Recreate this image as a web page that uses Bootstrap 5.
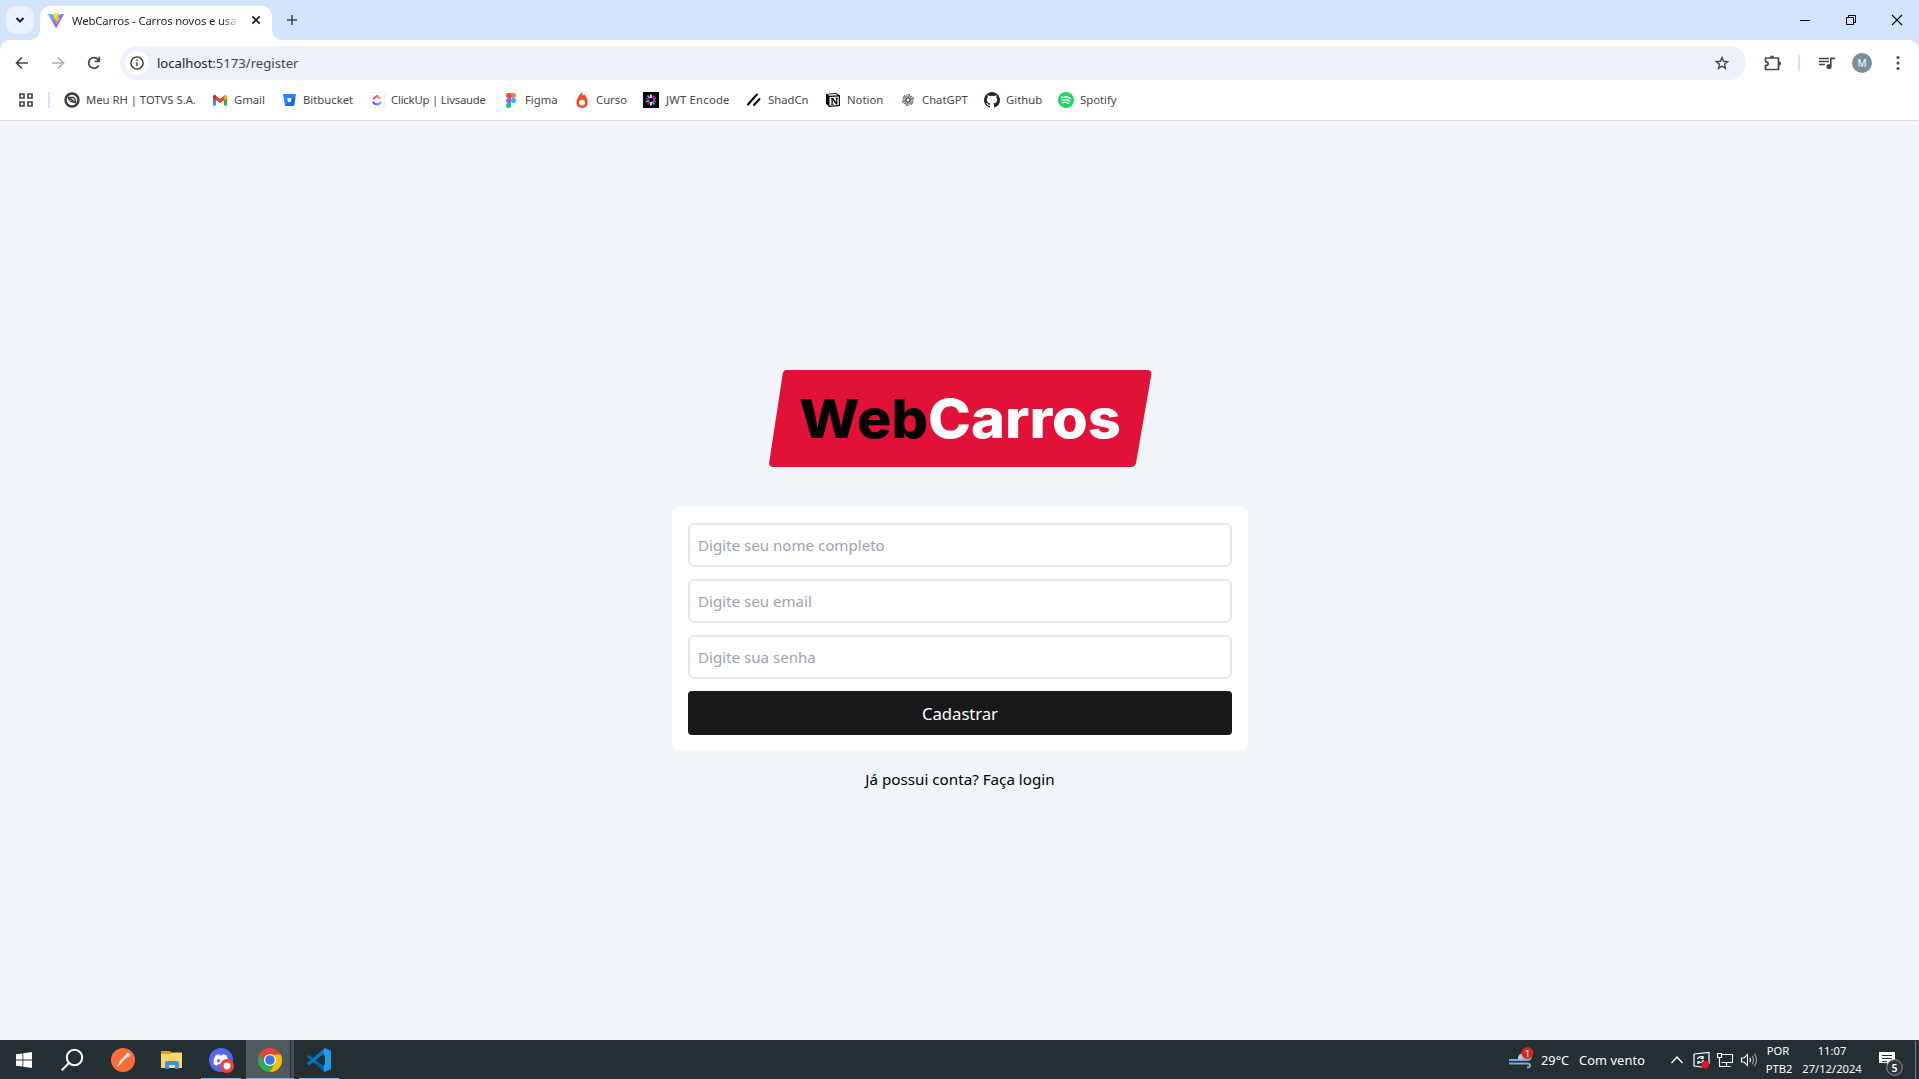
<!DOCTYPE html>
<html lang="pt-BR">
<head>
<meta charset="utf-8">
<meta name="viewport" content="width=device-width, initial-scale=1">
<title>WebCarros - Carros novos e usados</title>
<link href="https://cdn.jsdelivr.net/npm/bootstrap@5.3.0/dist/css/bootstrap.min.css" rel="stylesheet">
<style>
body{font-family:"Noto Sans","Open Sans",sans-serif;background:#f1f5f9;height:100vh;overflow:hidden;color:#1f1f1f}
svg{display:block;flex:none;overflow:visible}
.tabstrip{height:40px;background:#d3e3fd;padding-left:6px}
.tab-search{width:28px;height:28px;border-radius:10px;background:#ebf2fe;margin-top:6px}
.browser-tab{width:232px;height:34px;margin:6px 0 0 6px;background:#fff;border-radius:10px 10px 0 0;padding:0 10px 6px 8px;position:relative}
.browser-tab::before,.browser-tab::after{content:"";position:absolute;bottom:0;width:10px;height:10px}
.browser-tab::before{left:-10px;background:radial-gradient(circle at 0 0,transparent 9.5px,#fff 10px)}
.browser-tab::after{right:-10px;background:radial-gradient(circle at 100% 0,transparent 9.5px,#fff 10px)}
.tab-title{width:168px;font-size:11.3px;letter-spacing:-.13px;margin-left:8px;line-height:18px;padding-top:1px;-webkit-mask-image:linear-gradient(90deg,#000 150px,transparent 168px);mask-image:linear-gradient(90deg,#000 150px,transparent 168px)}
.win-controls{width:137px;height:40px}
.win-controls>span{width:46px;flex:none}
.toolbar-wrap{background:#d3e3fd;height:41px}
.toolbar{background:#fff;border-radius:10px 10px 0 0;height:41px;padding:6px 13px 1px 13px}
.omnibox{height:34px;width:1626px;border-radius:17px;background:#ecf1fa;padding-left:5px;padding-right:17px}
.site-info{width:24px;height:24px;background:#fff}
.address{font-size:13.2px;margin-left:8px;letter-spacing:-.04px;line-height:20px}
.address i{font-style:normal;color:#474747}
.bookmarks{height:40px;background:#fff;border-bottom:1px solid #dcdcdc;padding:0 0 1px 18px}
.bm{gap:6px;font-size:11.3px;color:#474747;line-height:16px}
.divider{width:2px;height:16px;background:#d3e3fd}
.page{height:919px;padding-top:249px}
.brand-logo{margin-bottom:40px}
.signup{width:576px;background:#fff;border-radius:8px;gap:12px;margin-left:1px}
.signup .form-control{height:44px;border:2px solid #e5e7eb;border-radius:6px;padding:0 8px;font-size:15.1px;letter-spacing:0}
.signup .form-control::placeholder{color:#9ca3af}
.signup .btn{height:44px;background:#18181b;border:0;border-radius:4px;font-size:16.8px;padding:2px 0 0;letter-spacing:-.1px}
.login-link{color:#000;font-size:15.2px;margin:16px 0 0 1px;line-height:24px}
.taskbar{height:39px;background:#242f34;color:#fff;font-size:12.8px}
.task{width:48px;height:39px;padding-top:1px}
.task.open{box-shadow:inset 0 -1px #76b9ed}
.tray{font-size:11.2px;line-height:18px;text-align:center}
</style>
</head>
<body class="d-flex flex-column">
<header>
  <div class="tabstrip d-flex">
    <div class="tab-search d-flex align-items-center justify-content-center"><svg width="10" height="8" fill="none" stroke="#1f1f1f" stroke-width="2"><path d="M1.5 2 5 5.5 8.500 2"/></svg></div>
    <div class="browser-tab d-flex align-items-center">
      <svg width="16" height="16" viewBox="0 0 32 32"><defs><linearGradient id="va" x2=".7" y2="1"><stop stop-color="#41d1ff"/><stop offset="1" stop-color="#bd34fe"/></linearGradient><linearGradient id="vb" x2="0" y2="1"><stop stop-color="#ffea83"/><stop offset=".2" stop-color="#ffdd35"/><stop offset="1" stop-color="#ffa800"/></linearGradient></defs><path fill="url(#va)" d="M31.800 5 17 31.200q-.8 1.100-1.700 0L.2 5q-.6-1.500 1-1.600l14.800 2.700 14.600-2.700q1.700.1 1.200 1.600"/><path fill="url(#vb)" d="M22.800.5 12 2.600l-.8 11.500 4-.7-1 5.500 3-.8-1.600 7.800 8-14.500-4.500.8z"/></svg>
      <span class="tab-title text-nowrap overflow-hidden">WebCarros - Carros novos e usa</span>
      <svg class="ms-auto" width="12" height="12" stroke="#1f1f1f" stroke-width="1.700"><path d="m2.300 2.300 7.400 7.400M9.700 2.300 2.300 9.700"/></svg>
    </div>
    <svg style="margin:14px 0 0 14px" width="12" height="12" stroke="#474747" stroke-width="1.600"><path d="M6 1v10M1 6h10"/></svg>
    <div class="win-controls d-flex ms-auto">
      <span class="d-flex align-items-center justify-content-center"><svg width="10" height="10" fill="none" stroke="#000"><path d="M0 5.500h10"/></svg></span>
      <span class="d-flex align-items-center justify-content-center"><svg width="10" height="10" fill="none" stroke="#000"><path d="M.5 2.500h7v7h-7zM2.500 2.500v-2h7v7h-2"/></svg></span>
      <span class="d-flex align-items-center justify-content-center"><svg width="10" height="10" fill="none" stroke="#000" stroke-width="1.100"><path d="m0 0 10 10M10 0 0 10"/></svg></span>
    </div>
  </div>
  <div class="toolbar-wrap">
    <div class="toolbar d-flex align-items-center">
      <svg width="18" height="18" fill="none" stroke="#474747" stroke-width="1.700"><path d="M15 9H4M9 3.500 3.500 9 9 14.500"/></svg>
      <svg style="margin-left:18px" width="18" height="18" fill="none" stroke="#b0b0b0" stroke-width="1.700"><path d="M3 9h11M9 3.500 14.500 9 9 14.500"/></svg>
      <svg style="margin-left:18px" width="18" height="18" fill="none" stroke="#474747" stroke-width="1.700"><path d="M13.700 11.300A5.300 5.300 0 1 1 13 5.500l1.200 1.300M14.300 2.800v4.500H9.700"/></svg>
      <div class="omnibox d-flex align-items-center" style="margin-left:17px">
        <span class="site-info rounded-circle d-flex align-items-center justify-content-center"><svg width="14" height="14" fill="none" stroke="#333" stroke-width="1.400"><circle cx="7" cy="7" r="6.100"/><path d="M7 6.200v4M7 3.500V5"/></svg></span>
        <span class="address">localhost<i>:5173/register</i></span>
        <svg class="ms-auto" width="14" height="14" viewBox="0 0 14 14" fill="none" stroke="#474747" stroke-width="1.400"><path d="m7 1.500 1.600 3.800 4.100.3-3.100 2.700.9 4.100L7 10.200l-3.500 2.200.9-4.100-3.100-2.700 4.100-.3z"/></svg>
      </div>
      <svg style="margin-left:18px" width="18" height="18" fill="none" stroke="#474747" stroke-width="1.700"><path d="M1.500 4h13v11.500h-13v-3.800q2.600-.2 2.600-2T1.500 7.800z" stroke-linejoin="round"/><path fill="#474747" stroke="none" d="M6 3.500a2.100 2.100 0 0 1 4.200 0zM15 7.500a2.100 2.100 0 0 1 0 4.200z"/></svg>
      <span class="divider" style="margin-left:16px"></span>
      <svg style="margin-left:19px" width="16" height="14" fill="none" stroke="#474747" stroke-width="1.700"><path d="M0 2.500h10M0 5.500h10M0 8.500h6M11.800 10V2.400H16"/><circle cx="10" cy="10.500" r="2.600" fill="#474747" stroke="none"/></svg>
      <span class="rounded-circle text-white d-flex align-items-center justify-content-center" style="margin-left:17px;width:20px;height:20px;background:#78909c;font-size:10px">M</span>
      <svg style="margin-left:24px" width="4" height="16" fill="#474747"><circle cx="2" cy="2.500" r="1.500"/><circle cx="2" cy="8" r="1.500"/><circle cx="2" cy="13.500" r="1.500"/></svg>
    </div>
  </div>
  <nav class="bookmarks d-flex align-items-center text-nowrap">
    <svg width="16" height="16" fill="none" stroke="#474747" stroke-width="1.700"><path d="M2 2h4v4H2zM10 2h4v4h-4zM2 10h4v4H2zM10 10h4v4h-4z"/></svg>
    <span class="divider" style="margin:0 14px"></span>
    <a class="bm d-flex align-items-center text-decoration-none" style="width:148px"><svg width="16" height="16" fill="none" stroke="#3d3a36"><circle cx="8" cy="8" r="6.500" stroke-width="2.400"/><path stroke-width="1.300" d="M4.500 5.500h4.700l2.300 2.200v3L6.800 9.500 4.500 7z"/><path stroke-width="1.500" d="m4 5 8 6"/></svg><span style="letter-spacing:-.02px">Meu RH | TOTVS S.A.</span></a>
    <a class="bm d-flex align-items-center text-decoration-none" style="width:69px"><svg width="16" height="16"><path fill="#4285f4" d="M1 4v9.500h3V6z"/><path fill="#34a853" d="M12 6v7.500h3V4z"/><path fill="#ea4335" d="m3 3 5 4 5-4v4.500L8 11 3 7.500z"/><path fill="#c5221f" d="M1 4.500Q1.200 2 3.500 3L4 8 1 6z"/><path fill="#fbbc04" d="M15 4.500Q14.800 2 12.500 3L12 8l3-2z"/></svg>Gmail</a>
    <a class="bm d-flex align-items-center text-decoration-none" style="width:88px"><svg width="16" height="16"><path fill="#2684ff" fill-rule="evenodd" d="M2 2h13l-2 12H4zm4.300 4 .7 4.300h3L10.700 6z"/><path fill="#0c5bd8" d="M14.400 6h-3.700L10 10.300H7L4.200 14H13z" opacity=".65"/></svg>Bitbucket</a>
    <a class="bm d-flex align-items-center text-decoration-none" style="width:134px"><svg width="16" height="16" fill="none" stroke-width="2.100"><defs><linearGradient id="ca"><stop stop-color="#ff02f0"/><stop offset="1" stop-color="#ffc800"/></linearGradient><linearGradient id="cb"><stop stop-color="#8930fd"/><stop offset="1" stop-color="#49ccf9"/></linearGradient></defs><rect x=".5" y=".5" width="15" height="15" rx="1" stroke="#f0f0f0" stroke-width="1"/><path stroke="url(#ca)" d="M4.300 7 8 3.800 11.700 7"/><path stroke="url(#cb)" d="M3.800 10Q8 14.800 12.200 10"/></svg><span style="letter-spacing:-.2px">ClickUp | Livsaude</span></a>
    <a class="bm d-flex align-items-center text-decoration-none" style="width:71px"><svg width="16" height="16"><path fill="#f24e1e" d="M8 1H5.500a2.400 2.400 0 0 0 0 5H8z"/><path fill="#ff7262" d="M8 1h2.500a2.400 2.400 0 0 1 0 5H8z"/><path fill="#a259ff" d="M8 6H5.500a2.400 2.400 0 0 0 0 5H8z"/><circle cx="10.500" cy="8.500" r="2.500" fill="#1abcfe"/><path fill="#0acf83" d="M8 11H5.500A2.500 2.500 0 1 0 8 13.500z"/></svg>Figma</a>
    <a class="bm d-flex align-items-center text-decoration-none" style="width:69px"><svg width="16" height="16"><path fill="#f04e23" fill-rule="evenodd" d="M7.500 0 9 3.500l1.500-1Q14 7 13.700 10.500A5.500 5.500 0 0 1 8 16q-5.300-.4-5.600-5.600C2.400 7 5 4 7.500 0M8 7.800a3 3 0 1 0 .1 0"/></svg>Curso</a>
    <a class="bm d-flex align-items-center text-decoration-none" style="width:103px"><svg width="16" height="16" stroke-width="1.700"><path fill="#000" d="M0 0h16v16H0z"/><path stroke="#fff" d="M8 2.500V6M8 10v3.500"/><path stroke="#fb015b" d="M9.200 6.300 11.500 3.500M6.800 9.700 4.500 12.500M2.800 6.300 6 7.300"/><path stroke="#00f2e6" d="M6.800 6.300 4.500 3.500M9.200 9.700l2.300 2.800M2.800 9.700 6 8.700"/><path stroke="#d63aff" d="m10 7.300 3.200-1M10 8.700l3.200 1"/></svg><span style="letter-spacing:.2px;margin-left:1px">JWT Encode</span></a>
    <a class="bm d-flex align-items-center text-decoration-none" style="width:79px"><svg width="16" height="16" stroke="#000" stroke-width="2" stroke-linecap="round"><path d="M2 12.500 9 4.500M8 13 13.500 7M9 4.500 11 2.500"/></svg>ShadCn</a>
    <a class="bm d-flex align-items-center text-decoration-none" style="width:75px"><svg width="16" height="16"><path d="M1 2l10-1 4 2.500V14l-11 1L1 11.500z"/><path fill="#fff" d="m2.500 2.500 8.200-.6 2.300 1.300-8.500.5zM4.500 5l9.300-.5V13l-9.300.7z"/><path d="M6 6h2.300l2.900 4.400V6.800l-.7-.2v-.8H13v.7l-.6.3v5.600H11L7.700 8v3.800l.9.200v.7H6V12l.5-.2V6.900L6 6.700z"/></svg>Notion</a>
    <a class="bm d-flex align-items-center text-decoration-none" style="width:84px"><svg width="16" height="16" fill="none" stroke="#4a4a4a" stroke-width=".95" viewBox="-9.500 -9.500 19 19"><g id="petal"><path d="M-2.300-3.500V1.300L0 2.600M-2.300-3.500A3 3 0 0 1 2.700-5.800L-1.100-3.600"/></g><use href="#petal" transform="rotate(60)"/><use href="#petal" transform="rotate(120)"/><use href="#petal" transform="rotate(180)"/><use href="#petal" transform="rotate(240)"/><use href="#petal" transform="rotate(300)"/></svg>ChatGPT</a>
    <a class="bm d-flex align-items-center text-decoration-none" style="width:74px"><svg width="16" height="16" fill="#24292f"><path d="M8 0a8 8 0 0 0-2.530 15.590c.4.070.550-.170.550-.380v-1.490c-2.010.370-2.530-.490-2.690-.940-.090-.230-.480-.940-.820-1.130-.280-.150-.680-.520-.010-.530.630-.010 1.080.580 1.230.820.720 1.210 1.870.870 2.330.660.070-.520.280-.870.510-1.070-1.780-.2-3.640-.890-3.640-3.950 0-.870.310-1.590.820-2.150-.080-.2-.360-1.020.080-2.120 0 0 .670-.210 2.200.820a7.500 7.500 0 0 1 4 0c1.530-1.040 2.200-.820 2.200-.820.440 1.100.160 1.920.080 2.120.510.560.820 1.270.820 2.150 0 3.070-1.870 3.750-3.650 3.950.290.250.540.730.540 1.480v2.200c0 .210.150.460.550.380A8 8 0 0 0 8 0"/></svg>Github</a>
    <a class="bm d-flex align-items-center text-decoration-none"><svg width="16" height="16" fill="none" stroke="#fff" stroke-linecap="round"><circle cx="8" cy="8" r="8" fill="#1ed760" stroke="none"/><path stroke-width="1.500" d="M3.500 5.500q5-1.400 9 .8"/><path stroke-width="1.300" d="M4 8.200q4.300-1.200 7.700.8"/><path stroke-width="1.100" d="M4.300 10.700q3.700-1 6.700.8"/></svg>Spotify</a>
  </nav>
</header>
<main class="page d-flex flex-column align-items-center">
  <svg class="brand-logo" width="382" height="97" font-family="Inter,sans-serif" font-weight="800" font-size="54"><path fill="#e11138" d="M17.500 0H378q5 0 4.300 4.500L367 93q-.8 4-5 4H4.500Q-.5 97 .2 92.500L13.700 4q.6-4 3.800-4"/><text x="30" y="68" textLength="129" lengthAdjust="spacingAndGlyphs">Web</text><text x="159" y="68" fill="#fff" textLength="193" lengthAdjust="spacingAndGlyphs">Carros</text></svg>
  <form class="signup d-flex flex-column p-3">
    <input class="form-control" type="text" placeholder="Digite seu nome completo">
    <input class="form-control" type="email" placeholder="Digite seu email">
    <input class="form-control" type="password" placeholder="Digite sua senha">
    <button class="btn text-white w-100" type="button">Cadastrar</button>
  </form>
  <a class="login-link text-decoration-none">Já possui conta? Faça login</a>
</main>
<footer class="taskbar d-flex align-items-stretch text-nowrap">
  <span class="task d-flex align-items-center justify-content-center"><svg width="16" height="16" fill="#fff"><path d="m0 2.300 6.500-.9v6.200H0zM7.300 1.300 16 0v7.600H7.300zM0 8.400h6.500v6.200L0 13.700zM7.300 8.400H16V16l-8.700-1.300z"/></svg></span>
  <span class="task d-flex align-items-center justify-content-center"><svg width="22" height="22" fill="none" stroke="#fff" stroke-width="2"><circle cx="13.500" cy="8.500" r="7.700"/><path d="M8 14 .8 21.200"/></svg></span>
  <span class="task d-flex align-items-center justify-content-center" style="margin-left:3px"><svg width="24" height="24"><circle cx="12" cy="12" r="12" fill="#ff6c37"/><path stroke="#fff" stroke-width="2.200" d="m9 14.500 7-7"/><circle cx="17" cy="6.800" r="2" fill="#fff"/><path stroke="#fff" stroke-width="1.200" d="m6.500 18 4-4"/></svg></span>
  <span class="task d-flex align-items-center justify-content-center" style="margin-left:1px"><svg width="22" height="18"><path fill="#dfa000" d="M0 0h9l2 3v4H0z"/><path fill="#ffd667" d="M0 3h9l1.500-1.500H21V17H0z"/><path fill="#3b94d9" d="M4 18v-6q0-2 2-2h10q2 0 2 2v6h-4v-4H8v4z"/></svg></span>
  <span class="task open d-flex align-items-center justify-content-center" style="width:40px;margin-left:5px"><svg width="24" height="24"><circle cx="12" cy="12" r="12" fill="#5865f2"/><path fill="#fff" d="M6.500 7.500Q9 6 10 6.300l.6 1h2.800l.6-1q1-.3 3.500 1.200Q20 11.500 19.500 16q-2 1.800-3.700 1.800l-1-1.500H9.200l-1 1.500Q6.500 17.800 4.500 16 4 11.500 6.500 7.500"/><ellipse cx="9.500" cy="12.800" rx="1.500" ry="1.700" fill="#5865f2"/><circle cx="18" cy="18" r="7" fill="#ed4245"/><circle cx="18" cy="18" r="3.400" fill="#fff"/></svg></span>
  <span class="task open d-flex align-items-center justify-content-center" style="margin-left:5px;padding-right:1px;background:linear-gradient(90deg,#4f5a5e 44px,#242f34 44px 45px,#434e52 45px)"><svg width="24" height="24"><circle cx="12" cy="12" r="12" fill="#34a853"/><path fill="#ea4335" d="M1.600 6A12 12 0 0 1 22.400 6L22.500 7H12l-5 7z"/><path fill="#fbbc04" d="M12 6.500h10.700A12 12 0 0 1 12 24l5-9z"/><circle cx="12" cy="12" r="6" fill="#fff"/><circle cx="12" cy="12" r="4.800" fill="#3779e8"/></svg></span>
  <span class="task open d-flex align-items-center justify-content-center" style="width:40px;margin-left:5px"><svg width="24" height="24"><path fill="#0065a9" d="M0 8.500 2 6.700l16 12.500V24L.4 9.300z"/><path fill="#007acc" d="M0 15.500 2 17.300 18 4.800V0L.4 14.700z"/><path fill="#1f9cf0" d="m17.500 0 6.500 2.800v18.400L17.500 24l-.7-1.500V1.500z"/><path fill="#242f34" d="M18 7v10l-7-5z"/></svg></span>
  <div class="d-flex align-items-center ms-auto" style="padding-top:1px">
    <svg class="mb-1" width="24" height="20"><path fill="#b8cbd8" d="M9 9a6 6 0 0 1 9-3l3 6H9z"/><path fill="none" stroke="#7fa8d5" stroke-width="2" d="M0 12h18q4 0 4-4M0 15.500h18q3 0 3 2t-3 2"/><circle cx="18.300" cy="5" r="6" fill="#d3281f"/><text x="15.700" y="8.500" fill="#fff" font-size="9.500">1</text></svg>
    <span style="width:38px;margin-left:8px;padding-top:1px">29°C</span>
    <span style="width:92px;padding-top:1px;letter-spacing:.1px">Com vento</span>
    <svg width="12" height="8" fill="none" stroke="#fff" stroke-width="1.300"><path d="m.5 7 5.500-6 5.500 6"/></svg>
    <svg style="margin-left:10px" width="16" height="16" fill="none" stroke="#fff" stroke-width="1.200"><path d="m1 2 15-1.500V12M1 2v12l8 1"/><path d="M4.500 7A3.500 3.500 0 0 1 10 5.500M10 4v2.500H7.500M10.500 8A3.500 3.500 0 0 1 5 10M5 12V9.500h2.500"/><circle cx="12.500" cy="12.800" r="3.700" fill="#e81123" stroke="none"/></svg>
    <svg style="margin-left:8px" width="16" height="16" fill="none" stroke="#fff" stroke-width="1.100"><path d="M5 2.500h10.500v8H4.500M9.500 10.500v4M5.500 14.500h8M.5 1.500h4v4h-4zM2.500 5.500v9h3"/></svg>
    <svg style="margin-left:8px" width="17" height="16" fill="none" stroke="#fff" stroke-width="1.100"><path d="M.5 6h2.600l3.400-3.500v11L3.100 10H.5zM8.800 5.800q1.600 2.200 0 4.400"/><path opacity=".6" d="M11 3.800q3 4.200 0 8.400M13.300 1.800q4.400 6.200 0 12.400"/></svg>
    <div class="tray" style="width:42px;"><div style="padding-right:2px">POR</div><div>PTB2</div></div>
    <div class="tray" style="width:64px;"><div>11:07</div><div>27/12/2024</div></div>
    <svg style="margin-left:15px" width="25" height="25"><path fill="#fff" d="M0 4h16v11h-5l-3 3.500V15H0z"/><path stroke="#242f34" d="M3 7.500h10M3 10.500h10M3 13.500h5"/><circle cx="15.500" cy="19.500" r="7.800" fill="#30363a" stroke="#929799"/><text x="12.500" y="23.500" fill="#fff" font-size="10.500" font-weight="600">5</text></svg>
    <span style="width:1px;height:39px;background:#778084;margin:0 3px 0 11px"></span>
  </div>
</footer>
<script src="https://cdn.jsdelivr.net/npm/bootstrap@5.3.0/dist/js/bootstrap.bundle.min.js"></script>
</body>
</html>
